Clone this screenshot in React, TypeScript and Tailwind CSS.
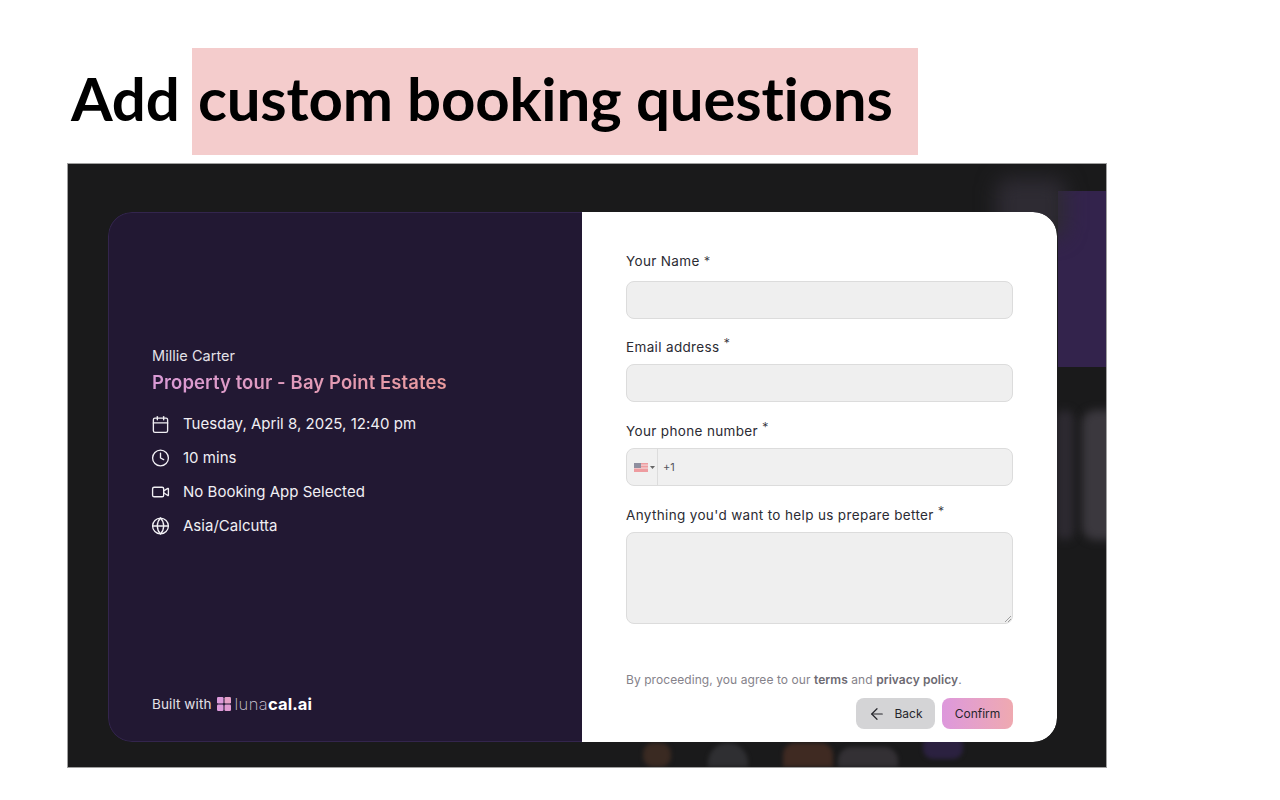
import { ArrowLeft, Calendar, Clock, Globe, Video } from "lucide-react";

const body = "font-['Inter','Liberation_Sans',sans-serif]";

function Field({ label, top, star }: { label: string; top: string; star?: boolean }) {
  return (
    <div className={top}>
      <div className="flex h-[18px] items-center text-[13.5px] leading-[18px] tracking-[0.35px] text-[#2b2b33]">
        <span>{label}</span>
        <span className={star ? "relative top-[-4px] ml-[4px] text-[13px] font-light" : "ml-[4px] text-[13px] font-light"}>*</span>
      </div>
    </div>
  );
}

function Row({ icon, text }: { icon: React.ReactNode; text: string }) {
  return (
    <div className="flex h-[34px] items-center gap-[12px] text-[15px] tracking-[0.02px] text-[#f1eff4]">
      <span className="flex w-[19px] justify-center">{icon}</span>
      <span>{text}</span>
    </div>
  );
}

export default function App() {
  return (
    <div className={`h-[800px] w-[1280px] overflow-hidden bg-white ${body}`}>
      <div className="flex h-[163px] items-start pl-[71px] pt-[48px] font-['Lato',sans-serif] text-[60px] font-bold leading-[101px] tracking-[-0.2px] text-black">
        <span className="w-[121px]">Add</span>
        <span className="h-[107px] w-[726px] bg-[#f4cccc] pl-[6px]">custom booking questions</span>
      </div>

      <div className="relative ml-[67px] h-[605px] w-[1040px] overflow-hidden border border-[#a0a0a0] bg-[#1a1a1b] pl-[40px] pt-[48px]">
        <div className="absolute right-0 top-[27px] h-[176px] w-[48px] bg-[#33234c]" />
        <div className="absolute right-[40px] top-[14px] h-[60px] w-[70px] rounded-[12px] bg-[#2e2b33] blur-[10px]" />
        <div className="absolute right-[-18px] top-[246px] h-[130px] w-[42px] rounded-[14px] bg-[#3b383e] blur-[4px]" />
        <div className="absolute right-[32px] top-[246px] h-[130px] w-[18px] rounded-[10px] bg-[#2d2a31] blur-[4px]" />
        <div className="absolute bottom-0 left-[575px] h-[24px] w-[28px] rounded-[10px] bg-[#3a2a22] blur-[2px]" />
        <div className="absolute bottom-0 left-[640px] h-[24px] w-[40px] rounded-t-full bg-[#2f2f32] blur-[2px]" />
        <div className="absolute bottom-0 left-[715px] h-[24px] w-[50px] rounded-t-[12px] bg-[#3f2a22] blur-[2px]" />
        <div className="absolute bottom-0 left-[770px] h-[20px] w-[60px] rounded-t-[14px] bg-[#333034] blur-[2px]" />
        <div className="absolute bottom-[8px] left-[855px] h-[24px] w-[40px] rounded-[10px] bg-[#2b2140] blur-[2px]" />

        <div className="relative flex h-[530px] w-[949px] overflow-hidden rounded-[24px]">
          <div className="flex w-[474px] flex-col rounded-l-[24px] border border-r-0 border-[#33254d] bg-[#221833] pl-[43px]">
            <div className="mt-[133px] text-[14.5px] leading-[20px] tracking-[0.03px] text-[#e4e1e8]">Millie Carter</div>
            <div className="mt-[3px] w-fit bg-gradient-to-r from-[#d99ad6] to-[#ea9a9c] bg-clip-text text-[18.5px] font-semibold leading-[26px] tracking-[0.1px] text-transparent">
              Property tour - Bay Point Estates
            </div>
            <div className="mt-[12px]">
              <Row icon={<Calendar size={19} strokeWidth={1.7} className="-translate-x-[1px]" />} text="Tuesday, April 8, 2025, 12:40 pm" />
              <Row icon={<Clock size={20} strokeWidth={1.7} className="-translate-x-[1px]" />} text="10 mins" />
              <Row icon={<Video size={20} strokeWidth={1.7} className="-translate-x-[1px]" />} text="No Booking App Selected" />
              <Row icon={<Globe size={20} strokeWidth={1.7} className="-translate-x-[1px]" />} text="Asia/Calcutta" />
            </div>
            <div className="mt-auto mb-[27px] flex items-center text-[13.5px] leading-[20px] tracking-[0.1px] text-[#e4e1e8]">
              <span>Built with</span>
              <svg className="ml-[6px]" width="14" height="14" viewBox="0 0 14 14">
                <rect width="6.5" height="6.5" rx="1.2" fill="#dd9adb" />
                <rect x="7.5" width="6.5" height="6.5" rx="1.2" fill="#e6a0c8" />
                <rect y="7.5" width="6.5" height="6.5" rx="1.2" fill="#dd9adb" />
                <rect x="7.5" y="7.5" width="6.5" height="6.5" rx="1.2" fill="#e19ad2" />
              </svg>
              <span className="ml-[3px] text-[16.5px] font-extralight tracking-[0.4px] text-[#cfc9d6]">luna</span>
              <span className="text-[16.5px] font-bold tracking-[0.1px] text-white">cal.ai</span>
            </div>
          </div>

          <div className="flex flex-1 flex-col rounded-r-[24px] bg-white pl-[44px] pr-[44px]">
            <Field label="Your Name" top="mt-[40px]" />
            <div className="mt-[11px] h-[38px] w-[387px] rounded-[8px] border border-[#dcdcdc] bg-[#efefef]" />
            <Field label="Email address" top="mt-[19px]" star />
            <div className="mt-[8px] h-[38px] w-[387px] rounded-[8px] border border-[#dcdcdc] bg-[#efefef]" />
            <Field label="Your phone number" top="mt-[20px]" star />
            <div className="mt-[8px] flex h-[38px] w-[387px] items-center rounded-[8px] border border-[#dcdcdc] bg-[#f0f0f0]">
              <div className="flex h-full w-[31px] items-center border-r border-[#dcdcdc] pl-[7px]">
                <svg width="14" height="9" viewBox="0 0 14 9">
                  <rect width="14" height="9" fill="#ee9ca0" />
                  <rect y="1.5" width="14" height="1.2" fill="#f4d5d5" />
                  <rect y="4.5" width="14" height="1.2" fill="#f4d5d5" />
                  <rect width="7" height="5" fill="#8f8f9f" />
                </svg>
                <svg className="ml-[2px]" width="5" height="3" viewBox="0 0 5 3">
                  <path d="M0 0h5L2.5 3z" fill="#666" />
                </svg>
              </div>
              <span className="ml-[5px] text-[11px] text-[#55555c]">+1</span>
            </div>
            <Field label="Anything you'd want to help us prepare better" top="mt-[20px]" star />
            <div className="relative mt-[8px] h-[92px] w-[387px] rounded-[8px] border border-[#dcdcdc] bg-[#efefef]">
              <svg className="absolute bottom-[1px] right-[1px]" width="7" height="7" viewBox="0 0 7 7">
                <path d="M1 7l6-6M4 7l3-3" stroke="#8a8a8a" strokeWidth="0.8" />
              </svg>
            </div>
            <div className="mt-[47px] text-[12px] leading-[18px] tracking-[0.07px] text-[#85828a]">
              By proceeding, you agree to our <span className="font-semibold text-[#6d6a72]">terms</span> and{" "}
              <span className="font-semibold text-[#6d6a72]">privacy policy</span>.
            </div>
            <div className="mt-[9px] flex w-[387px] justify-end gap-[7px]">
              <div className="flex h-[31px] w-[79px] items-center justify-center gap-[8px] rounded-[8px] bg-[#d4d4d6] text-[12px] text-[#26262c]">
                <ArrowLeft size={18} strokeWidth={1.6} />
                <span>Back</span>
              </div>
              <div className="flex h-[31px] w-[71px] items-center justify-center rounded-[8px] bg-gradient-to-r from-[#dd98dc] to-[#efa9b0] text-[12px] text-[#26262c]">
                Confirm
              </div>
            </div>
          </div>
        </div>
      </div>
    </div>
  );
}
